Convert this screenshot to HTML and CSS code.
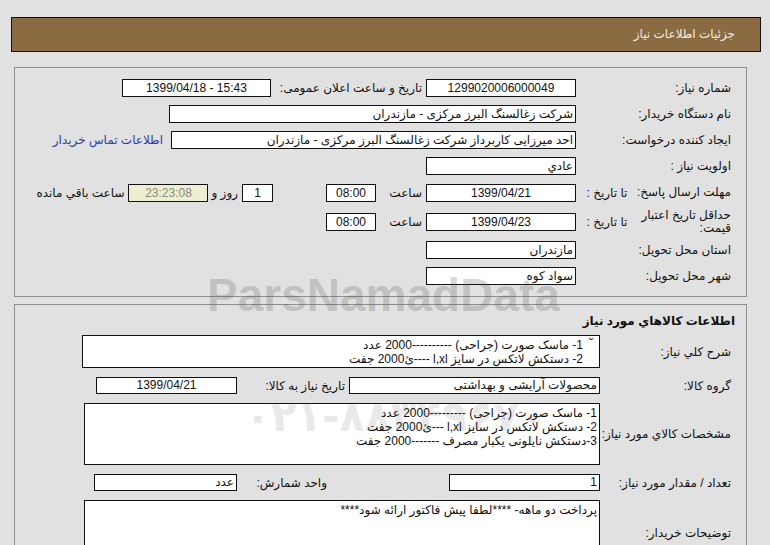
FILE: index.html
```html
<!DOCTYPE html>
<html lang="fa" dir="rtl">
<head>
    <meta charset="UTF-8">
    <title>جزئیات اطلاعات نیاز</title>
    <link rel="stylesheet" href="styles.css">
</head>
<body>
<div class="page">
    <div class="header">جزئیات اطلاعات نیاز</div>

    <div class="panel first">
        <div class="row">
            <div class="label">شماره نیاز:</div>
            <span class="box w150 center">1299020006000049</span>
            <span class="mid-label w155">تاریخ و ساعت اعلان عمومی:</span>
            <span class="box w149 center ltr">1399/04/18 - 15:43</span>
        </div>
        <div class="row">
            <div class="label">نام دستگاه خریدار:</div>
            <span class="box w407">شرکت زغالسنگ البرز مرکزی - مازندران</span>
        </div>
        <div class="row">
            <div class="label">ایجاد کننده درخواست:</div>
            <span class="box w405">احد میرزایی کاربرداز شرکت زغالسنگ البرز مرکزی - مازندران</span>
            <a class="contact" href="#">اطلاعات تماس خریدار</a>
        </div>
        <div class="row">
            <div class="label">اولویت نیاز :</div>
            <span class="box w150">عادي</span>
        </div>
        <div class="row tall">
            <div class="label split">
                <span class="main nowrap">مهلت ارسال پاسخ:</span>
                <span class="sub">تا تاریخ :</span>
            </div>
            <span class="box w150 center">1399/04/21</span>
            <span class="mid-label w50">ساعت</span>
            <span class="box w50 center">08:00</span>
            <span class="box w31 center days">1</span>
            <span class="small-label">روز و</span>
            <span class="box w80 center remain">23:23:08</span>
            <span class="small-label">ساعت باقي مانده</span>
        </div>
        <div class="row taller">
            <div class="label split">
                <span class="main">حداقل تاریخ اعتبار<br>قیمت:</span>
                <span class="sub">تا تاریخ :</span>
            </div>
            <span class="box w150 center">1399/04/23</span>
            <span class="mid-label w50">ساعت</span>
            <span class="box w50 center">08:00</span>
        </div>
        <div class="row">
            <div class="label">استان محل تحویل:</div>
            <span class="box w150">مازندران</span>
        </div>
        <div class="row">
            <div class="label">شهر محل تحویل:</div>
            <span class="box w150">سواد کوه</span>
        </div>
    </div>

    <div class="panel second">
        <div class="title">اطلاعات كالاهاي مورد نياز</div>
        <div class="row2">
            <div class="label">شرح کلي نياز:</div>
            <div class="box area h33 w518">
                <span class="arrow">&#711;</span>
                <div class="lines">1- ماسک صورت (جراحی) ----------2000 عدد<br>2- دستکش لاتکس در سایز l,xl ----ئ2000 جفت</div>
            </div>
        </div>
        <div class="row2">
            <div class="label">گروه کالا:</div>
            <span class="box w251">محصولات آرایشی و بهداشتی</span>
            <span class="mid-label w112">تاریخ نیاز به کالا:</span>
            <span class="box w141 center">1399/04/21</span>
        </div>
        <div class="row2">
            <div class="label">مشخصات كالاي مورد نياز:</div>
            <div class="box area h62 w516">
                <div class="lines">1- ماسک صورت (جراحی) ---------2000 عدد<br>2- دستکش لاتکس در سایز l,xl ---ئ2000 جفت<br>3-دستکش نایلونی یکبار مصرف -------2000 جفت</div>
            </div>
        </div>
        <div class="row2">
            <div class="label">تعداد / مقدار مورد نياز:</div>
            <span class="box w151">1</span>
            <span class="mid-label w212 unit">واحد شمارش:</span>
            <span class="box w143">عدد</span>
        </div>
        <div class="row2">
            <div class="label">توضیحات خریدار:</div>
            <div class="box area h70 w516 top">
                <div class="lines">پرداخت دو ماهه- ****لطفا پیش فاکتور ارائه شود****</div>
            </div>
        </div>
    </div>

    <div class="watermark">
        <div class="wm-brand">ParsNamadData</div>
        <div class="wm-phone">۰۲۱-۸۸۳۴۹۶۷۰</div>
    </div>
</div>
</body>
</html>
```

FILE: styles.css
```css
body {
    margin: 0;
    background-color: #e1e1e1;
    font-family: 'Liberation Sans', 'DejaVu Sans', sans-serif;
    font-size: 12px;
    color: #111;
}
.page {
    position: relative;
    width: 770px;
    height: 545px;
    overflow: hidden;
}
.header {
    margin: 17px 9px 0 11px;
    height: 35px;
    box-sizing: border-box;
    background: #8b6c42;
    border: 1px solid #111;
    color: #f4ede0;
    font-size: 12px;
    line-height: 33px;
    padding-right: 25px;
}
.panel {
    width: 733px;
    box-sizing: border-box;
    margin-right: 23px;
    border: 1px solid #8e8e8e;
}
.panel.first {
    margin-top: 15px;
    padding: 7px 0 7px;
}
.panel.second {
    margin-top: 7px;
    height: 260px;
    padding-top: 8px;
}
.row {
    display: flex;
    align-items: center;
    height: 26px;
}
.row.tall {
    height: 27px;
}
.row.taller {
    height: 31px;
}
.label {
    width: 170px;
    flex: none;
    box-sizing: border-box;
    padding-right: 15px;
    white-space: nowrap;
}
.label.split {
    display: flex;
    align-items: center;
}
.label .main {
    width: 93px;
    line-height: 13px;
}
.label .sub {
    width: 62px;
    text-align: center;
}
.nowrap {
    white-space: nowrap;
}
.box {
    display: block;
    flex: none;
    box-sizing: border-box;
    height: 18px;
    line-height: 16px;
    background: #fff;
    border: 1px solid #111;
    padding: 0 2px;
    white-space: nowrap;
    overflow: hidden;
}
.box.center {
    text-align: center;
}
.ltr {
    direction: ltr;
}
.w31 { width: 31px; }
.w50 { width: 50px; }
.w80 { width: 80px; }
.w112 { width: 112px; }
.w141 { width: 141px; }
.w143 { width: 143px; }
.w149 { width: 149px; }
.w150 { width: 150px; }
.w151 { width: 151px; }
.w155 { width: 155px; }
.w212 { width: 212px; }
.w251 { width: 251px; }
.w405 { width: 405px; }
.w407 { width: 407px; }
.w516 { width: 516px; }
.w518 { width: 518px; }
.mid-label {
    flex: none;
    box-sizing: border-box;
    padding-right: 4px;
    white-space: nowrap;
}
.small-label {
    flex: none;
    margin: 0 4px 0 3px;
    white-space: nowrap;
}
.days {
    margin-right: 53px;
}
.remain {
    background: #eeeed2;
    color: #8c8c7a;
}
.contact {
    margin-right: 8px;
    color: #2e3aa8;
    text-decoration: none;
    white-space: nowrap;
}
.title {
    font-weight: bold;
    padding-right: 11px;
    line-height: 16px;
    height: 16px;
    margin-bottom: 6px;
}
.row2 {
    display: flex;
    align-items: center;
    min-height: 17px;
    margin-bottom: 9px;
}
.row2 .label {
    width: 146px;
}
.row2 .box {
    height: 17px;
    line-height: 15px;
}
.row2 .box.area {
    display: flex;
    align-items: flex-start;
    white-space: normal;
    line-height: 14px;
    padding: 2px 2px;
}
.row2 .box.h33 { height: 33px; }
.row2 .box.h62 { height: 62px; }
.row2 .box.h70 { height: 70px; }
.row2:last-child {
    align-items: flex-start;
}
.row2:last-child .label {
    padding-top: 26px;
}
.arrow {
    width: 12px;
    margin-left: 2px;
    font-size: 14px;
    line-height: 12px;
    text-align: center;
}
.unit {
    padding-right: 122px;
}
.watermark {
    position: absolute;
    left: 0;
    top: 0;
    width: 770px;
    height: 545px;
    pointer-events: none;
    color: rgba(80, 80, 80, 0.22);
}
.wm-brand {
    position: absolute;
    left: 207px;
    top: 268px;
    font-family: 'Liberation Sans', sans-serif;
    font-weight: bold;
    font-size: 46px;
    direction: ltr;
}
.wm-phone {
    position: absolute;
    left: 245px;
    top: 392px;
    font-family: 'DejaVu Sans', sans-serif;
    font-size: 42px;
    font-weight: bold;
    direction: ltr;
    white-space: nowrap;
    color: rgba(80, 80, 80, 0.14);
}
```
